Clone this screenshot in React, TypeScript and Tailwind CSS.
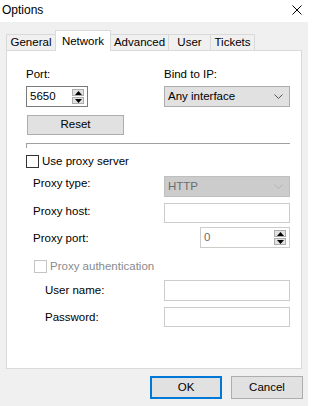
import type { ReactNode } from 'react';

const FONT = { fontFamily: '"Liberation Sans", Arial, sans-serif' };

function Chevron({ color }: { color: string }) {
  return (
    <svg width="9" height="5" viewBox="0 0 9 5" className="shrink-0">
      <polyline points="0.5,0.5 4.5,4.5 8.5,0.5" fill="none" stroke={color} strokeWidth="1" />
    </svg>
  );
}

function SpinArrows() {
  return (
    <div className="flex flex-col gap-px">
      <div className="flex h-[7px] w-[12px] items-center justify-center border border-[#adadad] bg-[#e1e1e1]">
        <svg width="7" height="4" viewBox="0 0 7 4">
          <polygon points="0,4 7,4 3.5,0" fill="#000" />
        </svg>
      </div>
      <div className="flex h-[7px] w-[12px] items-center justify-center border border-[#adadad] bg-[#e1e1e1]">
        <svg width="7" height="4" viewBox="0 0 7 4">
          <polygon points="0,0 7,0 3.5,4" fill="#000" />
        </svg>
      </div>
    </div>
  );
}

function Checkbox({ disabled }: { disabled?: boolean }) {
  return (
    <div
      className={`h-[13px] w-[13px] shrink-0 border bg-white ${
        disabled ? 'border-[#c4c4c4]' : 'border-[#333333]'
      }`}
    />
  );
}

function Row({ label, indent, children, top, labelTop }: {
  label: string;
  indent: string;
  children: ReactNode;
  top: string;
  labelTop: string;
}) {
  return (
    <div className={`flex items-start ${top}`}>
      <div className={`w-[138px] leading-[14px] ${indent} ${labelTop}`}>{label}</div>
      <div className="flex w-[126px] justify-end">{children}</div>
    </div>
  );
}

function TextBox({ h }: { h: string }) {
  return <div className={`${h} w-[126px] border border-[#cccccc] bg-white`} />;
}

export default function App() {
  return (
    <div className="h-[406px] w-[308px] overflow-hidden bg-[#f0f0f0] text-[11.5px] text-black" style={FONT}>
      {/* title bar */}
      <div className="flex h-[22px] items-center justify-between bg-white pl-[2px] pr-[6px]">
        <span className="-mt-[3px] text-[12px]">Options</span>
        <svg width="10" height="10" viewBox="0 0 10 10" className="-mt-[2px]">
          <line x1="0.5" y1="0.5" x2="9.5" y2="9.5" stroke="#000" strokeWidth="1" />
          <line x1="9.5" y1="0.5" x2="0.5" y2="9.5" stroke="#000" strokeWidth="1" />
        </svg>
      </div>

      {/* tabs */}
      <div className="mt-[8px] flex h-[20px] items-end pl-[6px]">
        <div className="flex h-[16px] w-[49px] items-center justify-center border-l border-t border-[#d9d9d9] pt-px">
          General
        </div>
        <div className="relative z-10 -mb-px flex h-[21px] w-[56px] items-start justify-center border-x border-t border-[#d9d9d9] bg-white pt-[2px]">
          Network
        </div>
        <div className="flex h-[16px] w-[58px] items-center justify-center border-r border-t border-[#d9d9d9] pt-px">
          Advanced
        </div>
        <div className="flex h-[16px] w-[42px] items-center justify-center border-r border-t border-[#d9d9d9] pt-px">
          User
        </div>
        <div className="flex h-[16px] w-[44px] items-center justify-center border-r border-t border-[#d9d9d9] pt-px">
          Tickets
        </div>
      </div>

      {/* panel */}
      <div className="mx-[6px] h-[319px] border border-[#d9d9d9] bg-white pl-[19px] pt-[16px]">
        <div className="flex">
          <div className="w-[138px]">
            <div className="leading-[14px]">Port:</div>
            <div className="mt-[5px] flex h-[21px] w-[62px] items-center justify-between border border-[#7a7a7a] bg-white pl-[3px] pr-[3px]">
              <span>5650</span>
              <SpinArrows />
            </div>
          </div>
          <div className="w-[126px]">
            <div className="leading-[14px]">Bind to IP:</div>
            <div className="mt-[5px] flex h-[21px] w-[126px] items-center justify-between border border-[#adadad] bg-[#e1e1e1] pl-[3px] pr-[6px]">
              <span>Any interface</span>
              <Chevron color="#555555" />
            </div>
          </div>
        </div>

        <button
          type="button"
          className="ml-px mt-[8px] flex h-[20px] w-[97px] items-center justify-center border border-[#adadad] bg-[#e1e1e1]"
        >
          Reset
        </button>

        <div className="mt-[8px] h-[5px] w-[264px] border-l border-t border-[#a0a0a0]" />

        <div className="mt-[7px] flex h-[13px] items-center">
          <Checkbox />
          <span className="ml-[3px]">Use proxy server</span>
        </div>

        <Row label="Proxy type:" indent="pl-[7px]" top="mt-[8px]" labelTop="pt-0">
          <div className="flex h-[21px] w-[126px] items-center justify-between border border-[#bfbfbf] bg-[#cccccc] pl-[3px] pr-[6px] text-[#6d6d6d]">
            <span>HTTP</span>
            <Chevron color="#b5b5b5" />
          </div>
        </Row>

        <Row label="Proxy host:" indent="pl-[7px]" top="mt-[6px]" labelTop="pt-px">
          <TextBox h="h-[20px]" />
        </Row>

        <Row label="Proxy port:" indent="pl-[7px]" top="mt-[4px]" labelTop="pt-[4px]">
          <div className="flex h-[21px] w-[90px] items-center justify-between border border-[#cccccc] bg-white pl-[3px] pr-[3px]">
            <span className="text-[#6d6d6d]">0</span>
            <SpinArrows />
          </div>
        </Row>

        <div className="ml-[8px] mt-[12px] flex h-[13px] items-center">
          <Checkbox disabled />
          <span className="ml-[3px] text-[#8a8a8a]">Proxy authentication</span>
        </div>

        <Row label="User name:" indent="pl-[19px]" top="mt-[7px]" labelTop="pt-[3px]">
          <TextBox h="h-[21px]" />
        </Row>

        <Row label="Password:" indent="pl-[19px]" top="mt-[6px]" labelTop="pt-[3px]">
          <TextBox h="h-[20px]" />
        </Row>
      </div>

      {/* buttons */}
      <div className="mt-[7px] flex justify-end gap-[9px] pr-[5px]">
        <button
          type="button"
          className="flex h-[23px] w-[72px] items-center justify-center border-2 border-[#0078d7] bg-[#e1e1e1]"
        >
          OK
        </button>
        <button
          type="button"
          className="flex h-[23px] w-[72px] items-center justify-center border border-[#adadad] bg-[#e1e1e1]"
        >
          Cancel
        </button>
      </div>
    </div>
  );
}
